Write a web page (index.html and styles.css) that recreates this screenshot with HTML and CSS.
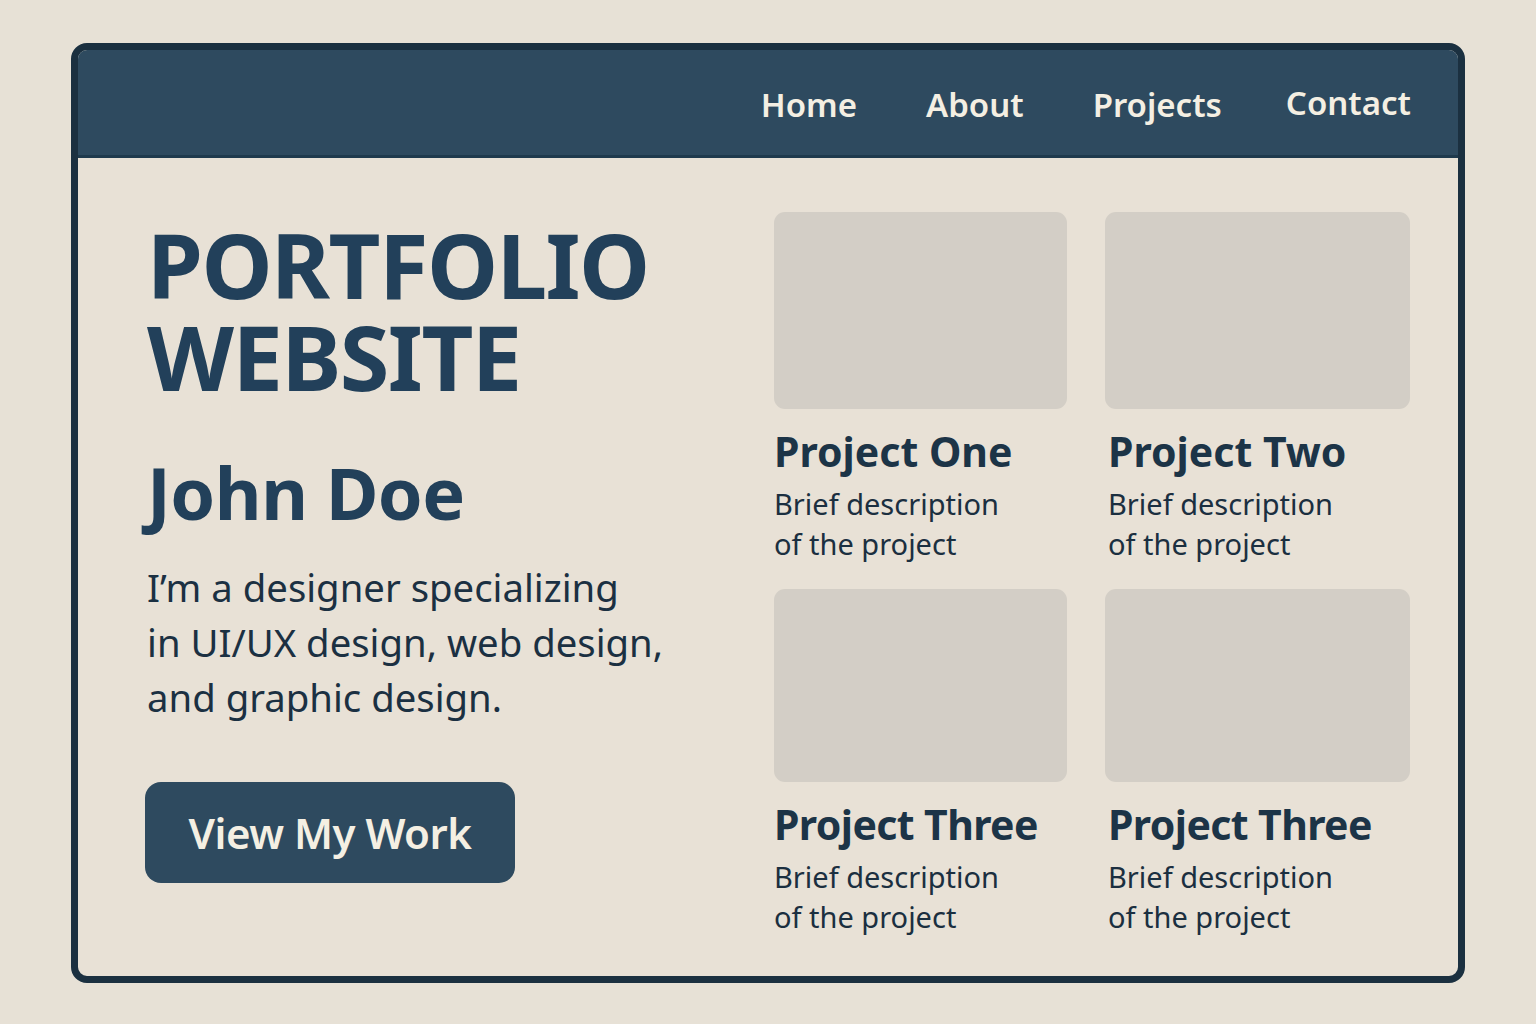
FILE: index.html
```html
<!DOCTYPE html>
<html lang="en">
<head>
<meta charset="utf-8">
<title>Portfolio Website</title>
<link rel="stylesheet" href="styles.css">
</head>
<body>
<div class="frame">
  <header class="topbar">
    <nav class="nav">
      <a class="nav-link" href="#">Home</a>
      <a class="nav-link" href="#">About</a>
      <a class="nav-link" href="#">Projects</a>
      <a class="nav-link contact" href="#">Contact</a>
    </nav>
  </header>
  <main class="content">
    <section class="intro">
      <h1 class="title"><span class="title-line">PORTFOLIO</span><span class="title-line">WEBSITE</span></h1>
      <h2 class="name">John Doe</h2>
      <p class="bio">I’m a designer specializing<br>in UI/UX design, web design,<br>and graphic design.</p>
      <a class="btn" href="#">View My Work</a>
    </section>
    <section class="projects">
      <article class="card">
        <div class="thumb"></div>
        <h3 class="card-title">Project One</h3>
        <p class="card-desc">Brief description<br>of the project</p>
      </article>
      <article class="card">
        <div class="thumb"></div>
        <h3 class="card-title">Project Two</h3>
        <p class="card-desc">Brief description<br>of the project</p>
      </article>
      <article class="card">
        <div class="thumb"></div>
        <h3 class="card-title">Project Three</h3>
        <p class="card-desc">Brief description<br>of the project</p>
      </article>
      <article class="card">
        <div class="thumb"></div>
        <h3 class="card-title">Project Three</h3>
        <p class="card-desc">Brief description<br>of the project</p>
      </article>
    </section>
  </main>
</div>
</body>
</html>
```

FILE: styles.css
```css
* { box-sizing: border-box; }
html, body { margin: 0; padding: 0; }
body {
  background: #e7e1d6;
  font-family: "Noto Sans", "Open Sans", sans-serif;
  color: #1d3446;
  padding: 43px 71px 41px 71px;
}
.frame {
  width: 1394px;
  height: 940px;
  border: 7px solid #1b3040;
  border-radius: 16px;
  background: #e8e1d6;
  overflow: hidden;
  display: flex;
  flex-direction: column;
}
.topbar {
  height: 108px;
  background: #2e4a5f;
  border-bottom: 3px solid #1f3a4d;
  display: flex;
  justify-content: flex-end;
  align-items: center;
  padding-right: 47px;
}
.nav { display: flex; gap: 69px; align-items: center; }
.nav-link {
  color: #f4efe3;
  text-decoration: none;
  font-size: 33px;
  font-weight: 600;
  padding-top: 4px;
}
.nav-link.contact { padding-top: 0; margin-left: -5px; }
.content {
  flex: 1;
  display: flex;
  padding: 54px 0 0 69px;
}
.intro { width: 627px; padding-top: 6px; }
.title {
  margin: 0;
  font-size: 90px;
  font-weight: 700;
  color: #22405a;
  letter-spacing: -1.5px;
  display: flex;
  flex-direction: column;
}
.title-line { display: block; height: 92px; line-height: 92px; overflow: visible; }
.name {
  margin: 50px 0 0;
  font-size: 72px;
  line-height: 80px;
  font-weight: 700;
  color: #22405a;
  letter-spacing: -0.5px;
}
.bio {
  margin: 28px 0 0;
  font-size: 38.3px;
  line-height: 55px;
  font-weight: 400;
  color: #1b3042;
}
.btn {
  display: inline-flex;
  align-items: center;
  justify-content: center;
  margin-top: 57px;
  margin-left: -2px;
  width: 370px;
  height: 101px;
  border-radius: 16px;
  background: #2e4a5f;
  color: #f4efe3;
  text-decoration: none;
  font-size: 42px;
  font-weight: 600;
  letter-spacing: -0.5px;
}
.projects {
  display: grid;
  grid-template-columns: 293px 305px;
  column-gap: 38px;
  row-gap: 25px;
  align-content: start;
}
.card { display: flex; flex-direction: column; }
.thumb {
  height: 197px;
  background: #d3cec6;
  border-radius: 11px;
}
.projects .card:nth-child(n+3) .thumb { height: 193px; }
.card-title {
  margin: 16px 0 0;
  font-size: 41px;
  line-height: 52px;
  font-weight: 700;
  color: #1c3447;
  white-space: nowrap;
}
.card:nth-child(n+3) .card-title { letter-spacing: -0.6px; }
.card:nth-child(2n) .card-title,
.card:nth-child(2n) .card-desc { padding-left: 3px; }
.card-desc {
  margin: 7px 0 0;
  font-size: 29px;
  line-height: 40px;
  color: #1b2f40;
  white-space: nowrap;
}
```
